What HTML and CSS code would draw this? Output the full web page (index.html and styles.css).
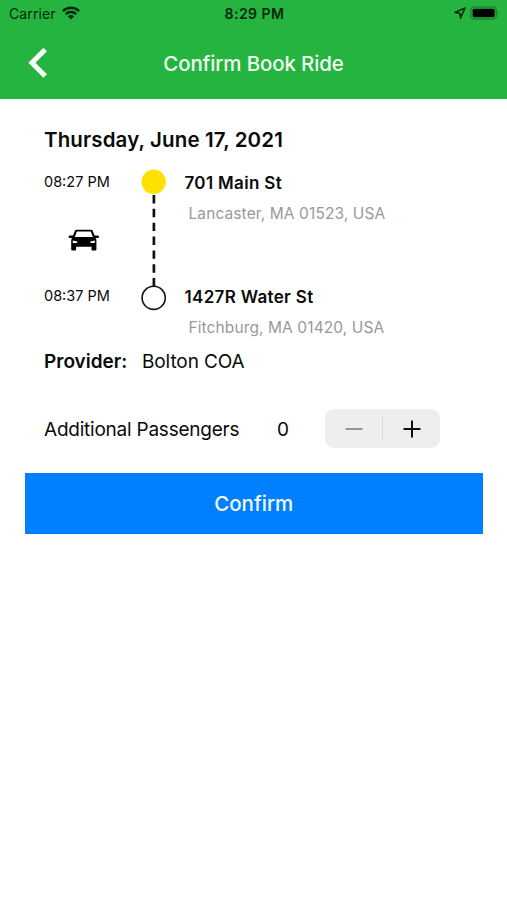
FILE: index.html
```html
<!DOCTYPE html>
<html lang="en">
<head>
<meta charset="utf-8">
<title>Confirm Book Ride</title>
<link rel="stylesheet" href="styles.css">
</head>
<body>
<header class="header">
  <div class="status">
    <div class="carrier">
      <span class="carrier-name">Carrier</span>
      <svg class="wifi" width="18" height="14" viewBox="0 0 18 14" fill="none" stroke="#03270a" stroke-width="2.4">
        <path d="M.9 5.1a11.5 11.5 0 0 1 16.2 0"/>
        <path d="M3.8 8.2a7.4 7.4 0 0 1 10.4 0"/>
        <path d="M9 13.4 5.9 10.3a4.4 4.4 0 0 1 6.2 0z" fill="#03270a" stroke="none"/>
      </svg>
    </div>
    <span class="clock">8:29 PM</span>
    <div class="indicators">
      <svg width="12" height="12" viewBox="0 0 12 12" fill="none" stroke="#03270a" stroke-width="1.5" stroke-linejoin="round"><path d="M11 1 1 5.4l4.8.8.7 4.9z"/></svg>
      <svg width="30" height="14" viewBox="0 0 30 14"><rect x=".9" y=".9" width="25.4" height="12.2" rx="3.6" fill="none" stroke="#1b8530" stroke-width="1.5"/><rect x="2.6" y="2.7" width="22" height="8.6" rx="1.6" fill="#000"/><path d="M27.6 4.8q1.7 2.1 0 4.2z" fill="#1b8530"/></svg>
    </div>
  </div>
  <nav class="nav">
    <svg class="back" width="20" height="32" viewBox="0 0 20 32" fill="none" stroke="#fff" stroke-width="5"><path d="M17.2 2.6 3.9 15.8l13.3 13.2"/></svg>
    <h1 class="title">Confirm Book Ride</h1>
  </nav>
</header>
<main class="content">
  <h2 class="date">Thursday, June 17, 2021</h2>
  <section class="trip">
    <div class="times">
      <span class="time">08:27 PM</span>
      <svg class="car" width="33" height="22" viewBox="0 0 33 22">
        <path fill="#000" fill-rule="evenodd" d="M9.4.8h14.8q1.2 0 1.6 1.1L27.6 6.500h3.200q1.200 0 1.200 1.300t-1.200 1.300h-2.300q.9.900.9 2.300v9q0 1-1 1h-2.900q-1 0-1-1v-2.700H9.100v2.700q0 1-1 1H5.200q-1 0-1-1v-9q0-1.400.9-2.300H2.800Q1.600 9.100 1.600 7.800t1.200-1.300H6l1.800-4.600Q8.200.8 9.400.8zM9.800 2.500 7.800 8h18l-2-5.500zM5.800 11.500v2.500h4.400v-1.500zm22 0v2.500h-4.400v-1.500z"/>
      </svg>
      <span class="time">08:37 PM</span>
    </div>
    <svg class="route" width="26" height="144" viewBox="0 0 26 144">
      <path d="M12.900 26v91" stroke="#111" stroke-width="2.700" stroke-dasharray="8.400 5.450" fill="none"/>
      <circle cx="12.700" cy="12.800" r="12.200" fill="#ffe100"/>
      <circle cx="12.700" cy="128.800" r="11.600" fill="#fff" stroke="#111" stroke-width="1.600"/>
    </svg>
    <div class="stops">
      <div class="stop"><b class="street">701 Main St</b><span class="city">Lancaster, MA 01523, USA</span></div>
      <div class="stop"><b class="street">1427R Water St</b><span class="city">Fitchburg, MA 01420, USA</span></div>
    </div>
  </section>
  <div class="provider"><b class="label">Provider:</b><span class="value">Bolton COA</span></div>
  <div class="passengers">
    <span class="plabel">Additional Passengers</span>
    <span class="count">0</span>
    <div class="stepper">
      <button class="step" aria-label="Remove"><svg width="18" height="18" viewBox="0 0 18 18" stroke="#858585" stroke-width="1.700"><path d="M.5 9h17"/></svg></button>
      <i class="divider"></i>
      <button class="step" aria-label="Add"><svg width="18" height="18" viewBox="0 0 18 18" stroke="#111" stroke-width="2"><path d="M.5 9h17M9 .5v17"/></svg></button>
    </div>
  </div>
</main>
<button class="confirm">Confirm</button>
</body>
</html>
```
FILE: styles.css
```css
* { box-sizing: border-box; }
body { margin: 0; background: #fff; color: #0a0a0a; font-family: Inter, "Liberation Sans", sans-serif; white-space: nowrap; }
button { border: 0; padding: 0; background: none; font: inherit; }
svg { display: block; flex: none; }
h1, h2 { margin: 0; }
.header { height: 98.5px; background: #25b43f; }
.status { height: 26px; display: grid; grid-template-columns: 1fr auto 1fr; align-items: center; padding: 0 7px 0 9px; color: #03270a; }
.carrier { display: flex; align-items: center; gap: 6px; }
.carrier-name { font-size: 14px; letter-spacing: 0.1px; }
.clock { font-size: 14px; font-weight: 600; letter-spacing: 0.5px; }
.indicators { display: flex; align-items: center; justify-content: flex-end; gap: 4px; }
.nav { height: 74px; display: grid; grid-template-columns: 1fr auto 1fr; align-items: center; padding: 0 28px; }
.title { color: #effff1; font-size: 20.5px; font-weight: 500; line-height: 28px; letter-spacing: -0.15px; padding-top: 2px; }
.content { padding: 27px 25px 0 44px; }
.date { font-size: 20.5px; font-weight: 600; line-height: 28px; letter-spacing: 0.13px; }
.trip { display: grid; grid-template-columns: 97px 43.5px 1fr; margin-top: 15px; height: 170px; }
.times { display: flex; flex-direction: column; }
.time { height: 26px; line-height: 26px; font-size: 14.5px; }
.car { margin: 34px 0 32px 23px; }
.stops { display: flex; flex-direction: column; gap: 54px; }
.stop { height: 60px; display: flex; flex-direction: column; align-items: flex-start; }
.street { height: 30px; line-height: 29px; font-size: 17px; font-weight: 600; letter-spacing: 0.33px; }
.city { height: 30px; line-height: 30px; font-size: 15.5px; color: #999; margin-left: 4px; letter-spacing: 0.1px; }
.provider { display: flex; height: 30px; margin-top: 8px; line-height: 30px; font-size: 19px; }
.label { font-weight: 600; width: 98px; }
.value { letter-spacing: -0.1px; }
.passengers { display: flex; align-items: center; height: 39px; margin-top: 32px; font-size: 19px; line-height: 25px; }
.plabel { width: 233px; padding-top: 2px; letter-spacing: -0.23px; }
.count { width: 48px; padding-top: 2px; }
.stepper { display: flex; align-items: center; width: 115px; height: 39px; border-radius: 9px; background: #eee; }
.step { flex: 1; height: 39px; display: flex; align-items: center; justify-content: center; padding-top: 1px; }
.divider { width: 1px; height: 23px; background: #d9d9d9; }
.confirm { display: block; width: 457.5px; height: 61px; margin: 25px 0 0 25px; background: #0080ff; color: #f2f9ff; font-size: 20.5px; font-weight: 500; }
```
